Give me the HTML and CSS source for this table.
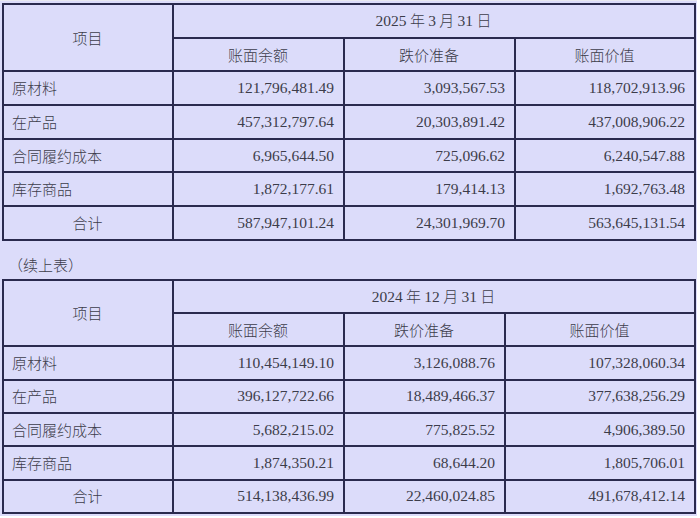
FILE: index.html
```html
<!DOCTYPE html>
<html lang="zh">
<head>
<meta charset="utf-8">
<link rel="stylesheet" href="styles.css">
</head>
<body>
<div class="page">
  <table class="grid">
    <colgroup><col class="c1"><col class="c2"><col class="c3"><col class="c4"></colgroup>
    <tr>
      <td rowspan="2" class="center">项目</td>
      <td colspan="3" class="center"><span class="num">2025</span> 年 <span class="num">3</span> 月 <span class="num">31</span> 日</td>
    </tr>
    <tr><td class="center">账面余额</td><td class="center">跌价准备</td><td class="center">账面价值</td></tr>
    <tr><td>原材料</td><td class="num">121,796,481.49</td><td class="num">3,093,567.53</td><td class="num">118,702,913.96</td></tr>
    <tr><td>在产品</td><td class="num">457,312,797.64</td><td class="num">20,303,891.42</td><td class="num">437,008,906.22</td></tr>
    <tr><td>合同履约成本</td><td class="num">6,965,644.50</td><td class="num">725,096.62</td><td class="num">6,240,547.88</td></tr>
    <tr><td>库存商品</td><td class="num">1,872,177.61</td><td class="num">179,414.13</td><td class="num">1,692,763.48</td></tr>
    <tr><td class="center">合计</td><td class="num">587,947,101.24</td><td class="num">24,301,969.70</td><td class="num">563,645,131.54</td></tr>
  </table>
  <p class="note">（续上表）</p>
  <table class="grid second">
    <colgroup><col class="c1"><col class="c2"><col class="c3b"><col class="c4b"></colgroup>
    <tr>
      <td rowspan="2" class="center">项目</td>
      <td colspan="3" class="center"><span class="num">2024</span> 年 <span class="num">12</span> 月 <span class="num">31</span> 日</td>
    </tr>
    <tr><td class="center">账面余额</td><td class="center">跌价准备</td><td class="center">账面价值</td></tr>
    <tr><td>原材料</td><td class="num">110,454,149.10</td><td class="num">3,126,088.76</td><td class="num">107,328,060.34</td></tr>
    <tr><td>在产品</td><td class="num">396,127,722.66</td><td class="num">18,489,466.37</td><td class="num">377,638,256.29</td></tr>
    <tr><td>合同履约成本</td><td class="num">5,682,215.02</td><td class="num">775,825.52</td><td class="num">4,906,389.50</td></tr>
    <tr><td>库存商品</td><td class="num">1,874,350.21</td><td class="num">68,644.20</td><td class="num">1,805,706.01</td></tr>
    <tr><td class="center">合计</td><td class="num">514,138,436.99</td><td class="num">22,460,024.85</td><td class="num">491,678,412.14</td></tr>
  </table>
</div>
</body>
</html>
```

FILE: styles.css
```css
html, body {
  margin: 0;
  padding: 0;
  background: #ffffff;
}
.page {
  width: 697px;
  height: 516px;
  box-sizing: border-box;
  padding: 2px 0 0 2px;
  background: #dcdcfa;
  border-top: 1px solid #e8e8f0;
  font-family: "Noto Sans CJK SC", "Noto Sans", sans-serif;
  font-weight: 300;
  color: #3c3c4a;
  font-size: 15px;
}
.grid {
  border-collapse: collapse;
  table-layout: fixed;
  width: 692px;
}
.grid td {
  border: 2px solid #2a2a4e;
  height: 31.7px;
  padding: 0 9px 0 8px;
  line-height: 18px;
  white-space: nowrap;
}
.second td {
  height: 31.3px;
}
.c1 { width: 170px; }
.c2 { width: 171px; }
.c3 { width: 171px; }
.c4 { width: 180px; }
.c3b { width: 161px; }
.c4b { width: 190px; }
.center { text-align: center; }
.num {
  font-family: "Liberation Serif", "Times New Roman", serif;
  font-weight: 400;
  font-size: 15.5px;
  text-align: right;
}
td.center .num { text-align: center; }
.note {
  margin: 0;
  height: 38px;
  line-height: 48px;
  padding-left: 6px;
}
```
